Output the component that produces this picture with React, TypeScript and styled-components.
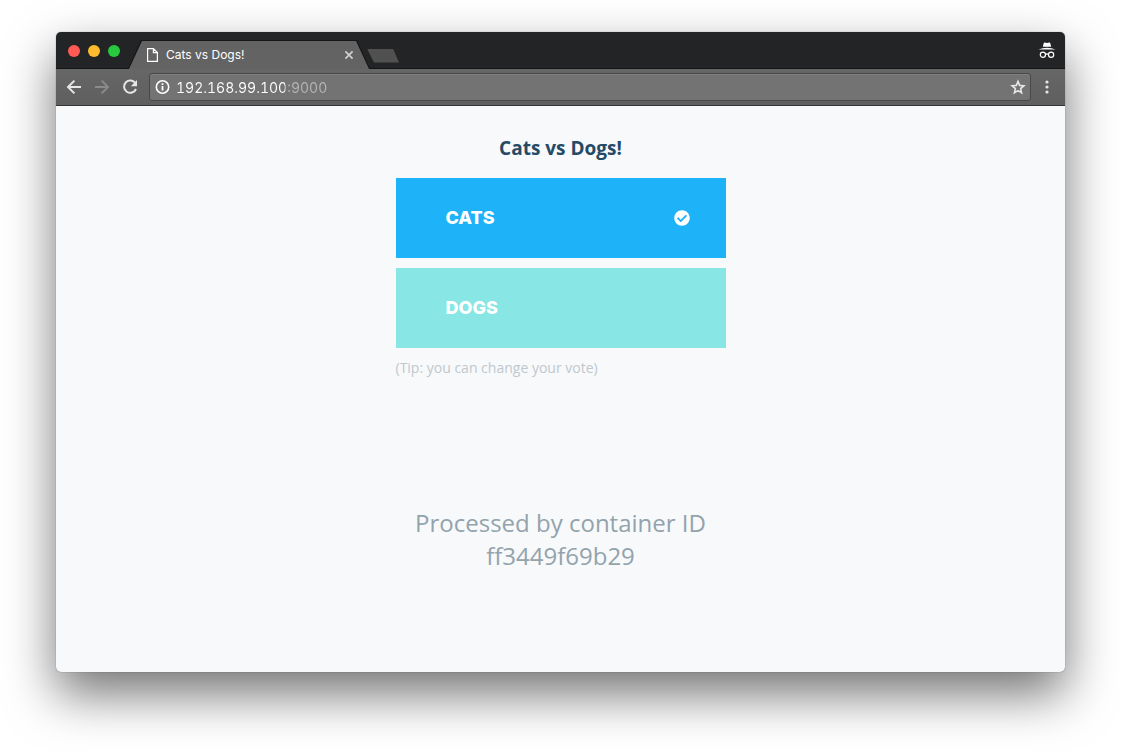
import React, { useState } from "react";
import styled, { createGlobalStyle } from "styled-components";
import { FaCheckCircle } from "react-icons/fa";

const GlobalStyle = createGlobalStyle`
  *, *::before, *::after { box-sizing: border-box; }
  body { margin: 0; background: #fff; }
  button, input { font: inherit; color: inherit; margin: 0; padding: 0; border: 0; background: none; }
  button { cursor: pointer; }
  svg { display: block; }
`;

const Desktop = styled.div`
  display: flex;
  min-height: 100vh;
  padding: 32px 56px 80px;
  font-family: Inter, "Liberation Sans", sans-serif;
`;

const BrowserWindow = styled.div`
  flex: 1;
  min-width: 0;
  display: flex;
  flex-direction: column;
  overflow: hidden;
  border-radius: 5px;
  background: #f8f9fb;
  box-shadow: 0 0 1px rgba(0, 0, 0, 0.6), 0 22px 50px rgba(0, 0, 0, 0.55);
`;

const TabStrip = styled.header`
  display: flex;
  align-items: flex-end;
  height: 37px;
  background: linear-gradient(#222425, #222425 36px, #141515 36px);
`;

const TrafficLights = styled.div`
  display: flex;
  align-self: center;
  gap: 8px;
  width: 72px;
  padding-left: 12px;
`;

const Light = styled.button<{ $color: string }>`
  width: 12px;
  height: 12px;
  border-radius: 50%;
  background: ${(p) => p.$color};
`;

const TabEdge = styled.div`
  width: 242px;
  height: 29px;
  padding-top: 1px;
  background: #151617;
  clip-path: polygon(13px 0, 229px 0, 100% 100%, 0 100%);
`;

const Tab = styled.div`
  display: flex;
  align-items: center;
  height: 28px;
  padding: 0 16px 0 19px;
  background: #636363;
  color: #fff;
  font-size: 12px;
  clip-path: polygon(14px 0, 228px 0, 241px 100%, 1px 100%);
`;

const TabTitle = styled.span`
  flex: 1;
  margin-left: 8px;
  line-height: 16px;
`;

const NewTab = styled.button`
  align-self: center;
  width: 32px;
  height: 14px;
  margin: 10px auto 0 -3px;
  background: #505050;
  clip-path: polygon(0 0, 26px 0, 100% 100%, 7px 100%);
`;

const Incognito = styled.div`
  align-self: center;
  margin-right: 9px;
`;

const Toolbar = styled.nav`
  display: flex;
  align-items: center;
  height: 37px;
  padding: 0 9px;
  background: linear-gradient(#666, #5f5f5f);
  border-bottom: 1px solid #333;
  color: #e6e6e6;
`;

const ToolButton = styled.button<{ $dim?: boolean }>`
  width: 18px;
  height: 18px;
  margin-right: 10px;
  color: ${(p) => (p.$dim ? "#8a8a8a" : "inherit")};
`;

const AddressBar = styled.div`
  flex: 1;
  min-width: 0;
  display: flex;
  align-items: center;
  height: 28px;
  padding: 0 4px 0 5px;
  border: 1px solid #484848;
  border-radius: 3px;
  background: #737373;
  box-shadow: inset 0 1px 0 #808080;
`;

const Address = styled.input`
  flex: 1;
  min-width: 0;
  height: 20px;
  margin-left: 5px;
  outline: none;
  font-size: 14px;
  font-variant-numeric: tabular-nums;
  background: linear-gradient(to right, #fff 109px, #b5b5b5 109px);
  background-clip: text;
  -webkit-background-clip: text;
  color: transparent;
`;

const MenuButton = styled.button`
  width: 18px;
  height: 18px;
  margin-left: 7px;
`;

const Page = styled.main`
  flex: 1;
  display: flex;
  flex-direction: column;
  align-items: center;
  padding: 29px 20px 80px;
  font-family: "Open Sans", sans-serif;
`;

const Title = styled.h1`
  margin: 0 0 17px;
  color: #254a66;
  font-size: 19px;
  font-weight: 700;
  line-height: 26px;
`;

const Ballot = styled.form`
  display: flex;
  flex-direction: column;
  gap: 10px;
  width: 100%;
  max-width: 330px;
`;

const Vote = styled.button<{ $color: string }>`
  display: flex;
  align-items: center;
  justify-content: space-between;
  height: 80px;
  padding: 0 36px 0 50px;
  background: ${(p) => p.$color};
  color: #fff;
  font-family: Inter, sans-serif;
  font-size: 18px;
  font-weight: 800;
`;

const VoteLabel = styled.span`
  padding-bottom: 2px;
`;

const Tip = styled.p`
  margin: 0;
  color: #bfc8cd;
  font-size: 14px;
  line-height: 20px;
`;

const Container = styled.p`
  margin: 128px 0 0;
  color: #93a3ac;
  font-size: 24px;
  line-height: 33px;
  text-align: center;
`;

const options = [
  { id: "a", label: "CATS", color: "#1eb2f9" },
  { id: "b", label: "DOGS", color: "#88e6e5" },
];

const stroke = { fill: "none", stroke: "currentColor", strokeWidth: 2 };

export default function App() {
  const [vote, setVote] = useState("a");

  return (
    <Desktop>
      <GlobalStyle />
      <BrowserWindow>
        <TabStrip>
          <TrafficLights>
            <Light type="button" $color="#ff5b54" aria-label="Close window" />
            <Light type="button" $color="#febb2e" aria-label="Minimize" />
            <Light type="button" $color="#28c93f" aria-label="Zoom" />
          </TrafficLights>
          <TabEdge>
            <Tab>
              <svg width="11" height="14" viewBox="0 0 11 14" fill="none" stroke="#fff" strokeWidth="1.2">
                <path d="M.6.6h5.8l4 4v8.8H.6zM6.4.6v4h4" />
              </svg>
              <TabTitle>Cats vs Dogs!</TabTitle>
              <button type="button" aria-label="Close tab">
                <svg width="10" height="10" viewBox="0 0 10 10" fill="none" stroke="#d0d0d0" strokeWidth="1.7">
                  <path d="M1.4 1.4l7.2 7.2M8.6 1.4L1.4 8.6" />
                </svg>
              </button>
            </Tab>
          </TabEdge>
          <NewTab type="button" aria-label="New tab" />
          <Incognito>
            <svg width="18" height="18" viewBox="0 0 18 18" fill="#fff">
              <path d="M5.8 1Q6 .3 6.6.5L9 1.1l2.4-.6q.6-.2.8.5l1 3.7H4.8zM.4 7.6Q4.5 5.8 9 5.8t8.6 1.8z" />
              <g fill="none" stroke="#fff" strokeWidth="1.2">
                <circle cx="4.9" cy="12.8" r="2.6" />
                <circle cx="13.1" cy="12.8" r="2.6" />
                <path d="M7.5 12.4q1.5-1 3 0" />
              </g>
            </svg>
          </Incognito>
        </TabStrip>

        <Toolbar>
          <ToolButton type="button" aria-label="Back">
            <svg width="18" height="18" viewBox="0 0 18 18" {...stroke}>
              <path d="M16 9H3.4M9.4 2.6L3 9l6.4 6.4" />
            </svg>
          </ToolButton>
          <ToolButton type="button" $dim aria-label="Forward">
            <svg width="18" height="18" viewBox="0 0 18 18" {...stroke}>
              <path d="M2 9h12.6M8.6 2.6L15 9l-6.4 6.4" />
            </svg>
          </ToolButton>
          <ToolButton type="button" aria-label="Reload">
            <svg width="18" height="18" viewBox="0 0 18 18" {...stroke}>
              <path d="M14.5 5.3A6.2 6.2 0 1 0 15 11" />
              <path d="M16 2v6.2H9.8z" fill="currentColor" stroke="none" />
            </svg>
          </ToolButton>
          <AddressBar>
            <svg width="16" height="16" viewBox="0 0 16 16" fill="none" stroke="#fff">
              <circle cx="7.5" cy="8" r="6.2" strokeWidth="1.6" />
              <path d="M7.5 4.2v1.7M7.5 7v4.6" strokeWidth="1.8" />
            </svg>
            <Address aria-label="Address" defaultValue="192.168.99.100:9000" spellCheck={false} />
            <button type="button" aria-label="Bookmark this page">
              <svg width="16" height="16" viewBox="0 0 16 16" fill="none" stroke="currentColor" strokeWidth="1.6">
                <path d="M8 2.4l1.6 4 4.3.4-3.3 2.8 1 4.2L8 11.6l-3.6 2.2 1-4.2-3.3-2.8 4.3-.4z" />
              </svg>
            </button>
          </AddressBar>
          <MenuButton type="button" aria-label="Menu">
            <svg width="18" height="18" viewBox="0 0 18 18" fill="currentColor">
              <circle cx="9" cy="4" r="1.6" />
              <circle cx="9" cy="9" r="1.6" />
              <circle cx="9" cy="14" r="1.6" />
            </svg>
          </MenuButton>
        </Toolbar>

        <Page>
          <Title>Cats vs Dogs!</Title>
          <Ballot onSubmit={(e) => e.preventDefault()}>
            {options.map((o) => (
              <Vote
                key={o.id}
                type="button"
                $color={o.color}
                aria-pressed={vote === o.id}
                onClick={() => setVote(o.id)}
              >
                <VoteLabel>{o.label}</VoteLabel>
                {vote === o.id && <FaCheckCircle size={16} aria-hidden />}
              </Vote>
            ))}
            <Tip>(Tip: you can change your vote)</Tip>
          </Ballot>
          <Container>
            Processed by container ID
            <br />
            ff3449f69b29
          </Container>
        </Page>
      </BrowserWindow>
    </Desktop>
  );
}
